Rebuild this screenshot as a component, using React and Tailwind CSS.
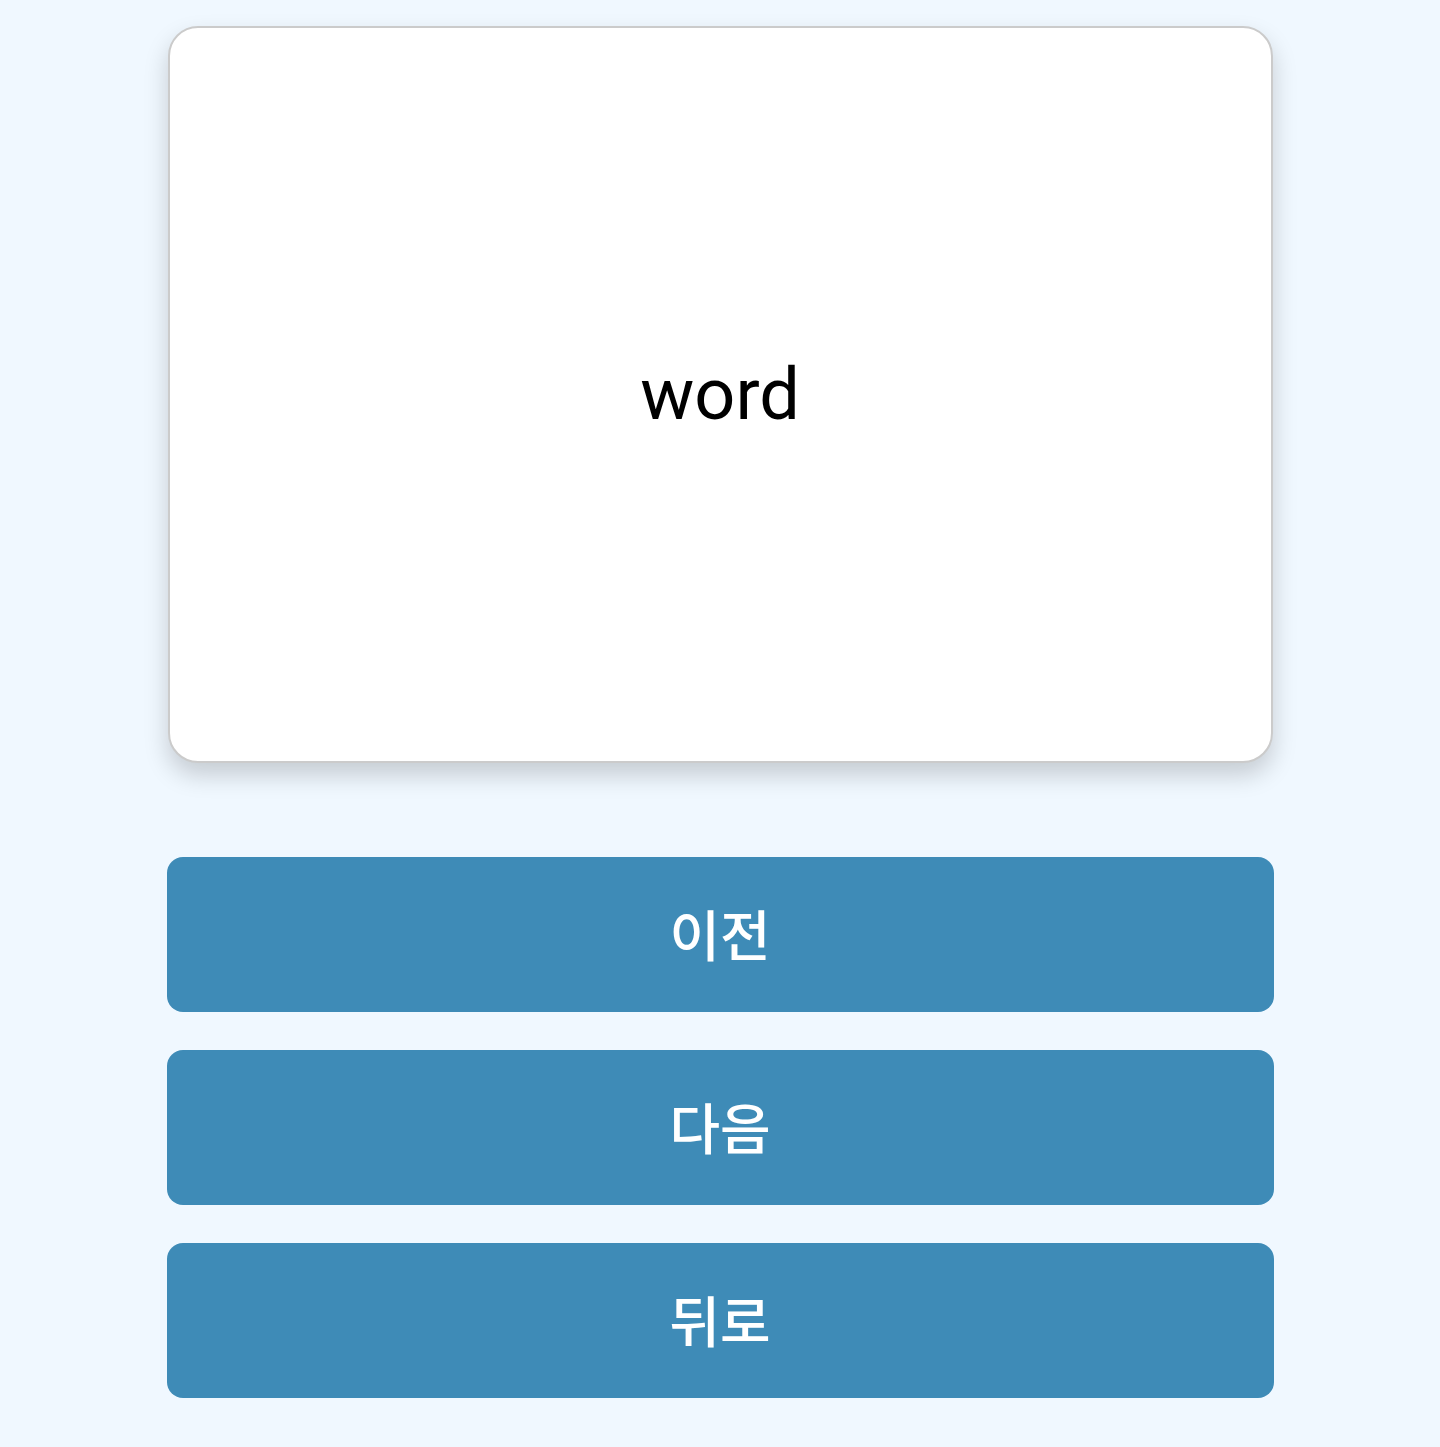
export default function App() {
  const buttons = ["이전", "다음", "뒤로"];
  return (
    <div className="min-h-[1447px] bg-[#f0f8ff] pt-[26px] font-['Roboto','Noto_Sans_CJK_KR',sans-serif]">
      <div className="mx-auto w-[1107px]">
        <div className="mx-auto flex h-[737px] w-[1105px] items-center justify-center rounded-[30px] border-2 border-[#cbcbcb] bg-white shadow-[0_12px_24px_rgba(0,0,0,0.18)]">
          <span className="text-[72px] text-black">word</span>
        </div>
        <div className="mt-[94px] flex flex-col gap-[38px]">
          {buttons.map((label) => (
            <button
              key={label}
              type="button"
              className="flex h-[155px] w-full items-center justify-center rounded-[16px] bg-[#3e8bb7] pt-[6px] text-[55px] font-medium text-white"
            >
              {label}
            </button>
          ))}
        </div>
      </div>
    </div>
  );
}
